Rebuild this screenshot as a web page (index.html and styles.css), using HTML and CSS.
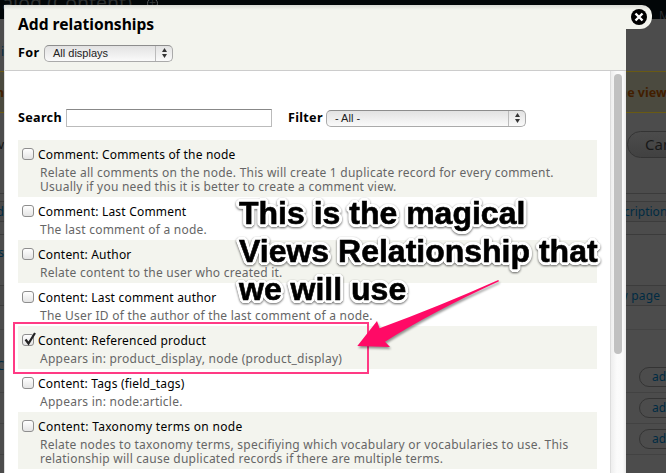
FILE: index.html
```html
<!DOCTYPE html>
<html lang="en">
<head>
<meta charset="utf-8">
<title>Add relationships</title>
<link rel="stylesheet" href="styles.css">
</head>
<body>
<div class="page">
  <div class="topbar"><span class="site">alog (Content)</span><span class="plus">+</span><span class="tab">M</span></div>
  <div class="gap-a"><span class="frag link">i</span></div>
  <div class="notice"><span class="frag">m</span><span class="notice-text">he view</span></div>
  <div class="gap-b"><span class="frag">v</span><span class="cancel">Cancel</span></div>
  <div class="rule-a"></div>
  <div class="band desc"><span class="frag link">d</span><span class="desc-text link">cription</span></div>
  <div class="rule-b"></div>
  <div class="gap-c"><span class="frag link">s</span></div>
  <div class="band pager"><span class="pager-text link">view page</span></div>
  <div class="gap-d"></div>
  <div class="addrow first"><span class="frag link c">C</span><span class="add">add</span></div>
  <div class="addrow"><span class="frag"></span><span class="add">add</span></div>
  <div class="addrow"><span class="frag"></span><span class="add">add</span></div>
</div>

<div class="close-tab">
  <svg width="18" height="18" viewBox="0 0 18 18"><circle cx="9" cy="9" r="8" fill="#000"/><path d="M5.5 5.5 12.5 12.5M12.5 5.5 5.5 12.5" stroke="#fff" stroke-width="2.4"/></svg>
</div>
<section class="modal">
  <header class="head">
    <h1>Add relationships</h1>
    <div class="for-row"><label class="for-label">For</label>
      <div class="select displays"><span>All displays</span><i><svg width="7" height="10" viewBox="0 0 7 10"><path d="M3.5 0 6 4H1zM3.5 10 1 6H6z" fill="#333"/></svg></i></div>
    </div>
  </header>
  <div class="body">
    <div class="content">
      <div class="filters">
        <label class="search-label">Search</label><div class="input"></div>
        <label class="filter-label">Filter</label>
        <div class="select all"><span>- All -</span><i><svg width="7" height="10" viewBox="0 0 7 10"><path d="M3.5 0 6 4H1zM3.5 10 1 6H6z" fill="#333"/></svg></i></div>
      </div>
      <div class="row odd"><span class="check"></span><div><p class="name">Comment: Comments of the node</p><p class="info">Relate all comments on the node. This will create 1 duplicate record for every comment.<br>Usually if you need this it is better to create a comment view.</p></div></div>
      <div class="row"><span class="check"></span><div><p class="name">Comment: Last Comment</p><p class="info">The last comment of a node.</p></div></div>
      <div class="row odd"><span class="check"></span><div><p class="name">Content: Author</p><p class="info">Relate content to the user who created it.</p></div></div>
      <div class="row"><span class="check"></span><div><p class="name">Content: Last comment author</p><p class="info">The User ID of the author of the last comment of a node.</p></div></div>
      <div class="row odd"><span class="check"><svg width="14" height="15" viewBox="0 0 14 15"><path d="M2.5 7.5 5.5 11.5 12 1" fill="none" stroke="#222" stroke-width="2.2"/></svg></span><div><p class="name">Content: Referenced product</p><p class="info">Appears in: product_display, node (product_display)</p></div></div>
      <div class="row"><span class="check"></span><div><p class="name">Content: Tags (field_tags)</p><p class="info">Appears in: node:article.</p></div></div>
      <div class="row odd"><span class="check"></span><div><p class="name last">Content: Taxonomy terms on node</p><p class="info">Relate nodes to taxonomy terms, specifiying which vocabulary or vocabularies to use. This<br>relationship will cause duplicated records if there are multiple terms.</p></div></div>
    </div>
    <div class="scroll"><div class="thumb"></div></div>
  </div>
</section>

<div class="highlight"></div>
<svg class="arrow" width="160" height="80" viewBox="350 275 160 80"><path d="M498.3 280Q440 306 379.5 328.3L377 321 357.3 346 390 347 385 341.7Q430 313 499 281.2Z" fill="#ff0a66"/></svg>
<div class="callout"><p>This is the magical</p><p>Views Relationship that</p><p>we will use</p></div>
</body>
</html>
```

FILE: styles.css
```css
* { box-sizing: border-box; }
body { margin: 0; width: 666px; height: 473px; overflow: hidden; position: relative; background: #4c4c4c; font-family: "Noto Sans", sans-serif; font-size: 12px; color: #000; }
p, h1 { margin: 0; }

.page { height: 473px; overflow: hidden; display: flex; flex-direction: column; }
.page > div { flex: none; display: flex; align-items: center; white-space: nowrap; overflow: hidden; }
.page > div > span { flex: none; }
.frag { width: 4px; overflow: hidden; color: #111; display: flex; justify-content: flex-end; }
.link, .frag.link { color: #002b43; }
.page .topbar { height: 19px; background: #020608; color: #2d3031; }
.site { width: 132px; font-size: 19.5px; line-height: 20px; margin-top: -13px; display: flex; justify-content: flex-end; }
.plus { margin: -12px 0 0 15px; width: 11px; height: 11px; border: 1px solid #55585a; border-radius: 50%; line-height: 8px; text-align: center; }
.tab { margin: 12px 0 0 501px; font-size: 12px; }
.page .gap-a { height: 52px; padding-top: 12px; }
.page .notice { height: 42px; background: #4b4a3f; border: solid #695a14; border-width: 1px 0; color: #421e00; font-weight: bold; font-size: 12.5px; }
.notice .frag { color: #421e00; }
.notice-text { margin-left: 615px; }
.page .gap-b { height: 80px; padding-bottom: 17px; }
.cancel { margin: -1px 0 0 623px; width: 90px; height: 27px; border: 1px solid #343434; border-radius: 14px; background: linear-gradient(#4c4c4c, #414141); padding-left: 17px; font-size: 15px; line-height: 25px; color: #181818; }
.page .rule-a { height: 8px; border-top: 1px solid #3b3b3b; }
.page .band { background: #494949; border: solid #3c3c3c; border-width: 1px 0; height: 21px; }
.desc-text { margin-left: 620px; }
.page .rule-b { height: 13px; border-bottom: 1px solid #3b3b3b; }
.page .gap-c { height: 50px; padding-bottom: 15px; }
.pager-text { margin-left: 602px; letter-spacing: 0.2px; }
.page .gap-d { height: 24px; border-bottom: 1px solid #444; }
.page .addrow { height: 31px; border-bottom: 1px solid #424242; }
.page .addrow.first { height: 63px; padding-top: 31px; }
.frag.c { margin-top: -23px; }
.add { margin-left: 635px; width: 60px; height: 20px; border: 1px solid #343434; border-radius: 10px; padding-left: 12px; line-height: 18px; color: #002b43; }

.modal { position: absolute; left: 4px; top: 5px; width: 622px; height: 468px; background: #fff; display: flex; flex-direction: column; border-left: 1px solid #ddd; }
.close-tab { position: absolute; left: 600px; top: 5px; width: 52px; height: 24px; background: linear-gradient(#d9dad5 0, #f3f4ee 5px); border-radius: 0 10px 12px 0; display: flex; justify-content: flex-end; padding: 3px 4px 0 0; }
.head { height: 66px; background: linear-gradient(#d9dad5 0, #f3f4ee 5px); border-bottom: 1px solid #ccc; padding: 8px 0 0 13px; }
.head h1 { font-size: 15.6px; line-height: 23px; font-weight: bold; white-space: nowrap; }
.for-row { display: flex; align-items: center; height: 18px; margin-top: 8px; }
label { font-weight: bold; font-size: 12.6px; letter-spacing: 0.3px; line-height: 16px; white-space: nowrap; }
.for-label { width: 26px; }
.select { height: 17px; border: 1px solid #aaa; border-top-color: #8d8d8d; border-radius: 5px; background: linear-gradient(#e2e2e2, #fafafa); display: flex; font-family: "Liberation Sans", sans-serif; font-size: 11px; line-height: 15px; color: #222; }
.select span { flex: 1; padding-left: 8px; }
.select i { width: 17px; border-left: 1px solid #bbb; display: flex; align-items: center; justify-content: center; }
.displays { width: 129px; }
.body { flex: 1; display: flex; }
.content { width: 592px; padding: 37px 0 0 13px; margin-right: 13px; }
.filters { display: flex; align-items: center; height: 20px; margin-bottom: 12px; }
.search-label { width: 48px; }
.input { width: 206px; height: 18px; border: 1px solid #bbb; border-top-color: #888; }
.filter-label { width: 38px; margin-left: 16px; }
.all { width: 200px; }
.row { display: flex; height: 43px; padding-left: 4px; }
.row.odd { background: #f3f4ee; }
.row:nth-child(2), .row:nth-child(8) { height: 57px; }
.check { width: 12px; height: 12px; margin: 8px 4px 0 0; border: 1px solid #8e8e8e; border-radius: 3px; background: linear-gradient(#fff, #e4e4e4); flex: none; }
.check svg { display: block; margin: -3px 0 0 0; }
.name { line-height: 16px; margin-top: 7px; white-space: nowrap; letter-spacing: 0.2px; }
.name.last { letter-spacing: 0.3px; }
.info { font-size: 12px; line-height: 14px; margin: 3px 0 0 2px; color: #666; white-space: nowrap; letter-spacing: 0.24px; }
.scroll { flex: none; width: 16px; border-left: 1px solid #ddd; background: linear-gradient(90deg, #eee, #fbfbfb 40%, #fafafa 80%, #e8e8e8); padding: 3px 0 0 3px; }
.thumb { width: 8px; height: 280px; border-radius: 4px; background: #c1c1c1; }

.highlight { position: absolute; left: 13px; top: 322px; width: 356px; height: 52px; border: 2px solid #ff3a84; }
.arrow { position: absolute; left: 350px; top: 275px; filter: drop-shadow(1px 2px 1px #0006); }
.callout { position: absolute; left: 239px; top: 194px; font: bold 32px/38px "Liberation Sans", sans-serif; color: #000; white-space: nowrap; -webkit-text-stroke: 0.6px #000; text-shadow: 3px 0 #fff, -3px 0 #fff, 0 3px #fff, 0 -3px #fff, 2px 2px #fff, -2px 2px #fff, 2px -2px #fff, -2px -2px #fff, 3px 1px #fff, -3px 1px #fff, 1px 3px #fff, -1px 3px #fff, 3px -1px #fff, -3px -1px #fff, 1px -3px #fff, -1px -3px #fff; filter: drop-shadow(0 1px 1px #0009); }
```
